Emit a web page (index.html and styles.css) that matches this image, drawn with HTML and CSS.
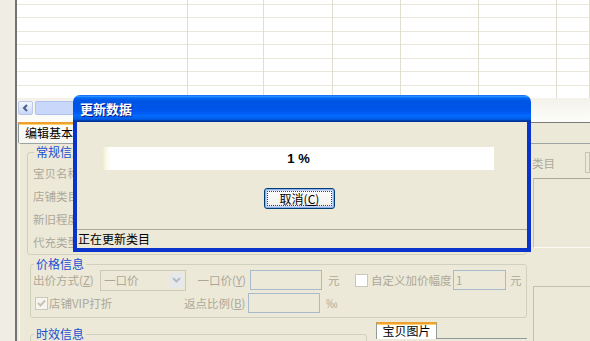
FILE: index.html
```html
<!DOCTYPE html>
<html lang="zh-CN">
<head>
    <meta charset="UTF-8">
    <meta name="viewport" content="width=device-width, initial-scale=1.0">
    <title>宝贝编辑 - 更新数据</title>
    <link rel="stylesheet" href="styles.css">
</head>
<body>
    <div class="app">
        <!-- item list (scrolled) -->
        <div class="grid">
            <div class="col"></div>
            <div class="col"></div>
            <div class="col"></div>
            <div class="col"></div>
            <div class="col"></div>
            <div class="col"></div>
            <div class="col"></div>
        </div>
        <div class="hscroll">
            <span class="sb-btn">
                <svg width="7" height="8" viewBox="0 0 7 8"><path d="M5 1 L2 4 L5 7" fill="none" stroke="#4d6185" stroke-width="2"/></svg>
            </span>
            <span class="sb-thumb"></span>
        </div>

        <div class="tabstrip">
            <span class="tab">编辑基本信息</span>
            <span class="tabstrip-rest"></span>
        </div>

        <div class="panel">
            <div class="main-col">
                <fieldset class="group g-basic">
                    <legend>常规信息</legend>
                    <div class="row"><span class="lbl">宝贝名称</span></div>
                    <div class="row"><span class="lbl">店铺类目</span></div>
                    <div class="row"><span class="lbl">新旧程度</span></div>
                    <div class="row"><span class="lbl">代充类型</span></div>
                </fieldset>

                <fieldset class="group g-price">
                    <legend>价格信息</legend>
                    <div class="prow">
                        <span class="lbl w-mode">出价方式(<u>Z</u>)</span>
                        <span class="select">
                            <span class="select-val">一口价</span>
                            <span class="select-btn">
                                <svg width="9" height="6" viewBox="0 0 9 6"><path d="M1 1 L4.5 4.5 L8 1" fill="none" stroke="#b4bccb" stroke-width="2"/></svg>
                            </span>
                        </span>
                        <span class="lbl w-right">一口价(<u>Y</u>)</span>
                        <span class="field w-price"></span>
                        <span class="lbl unit">元</span>
                        <span class="cb"></span>
                        <span class="lbl w-custom">自定义加价幅度</span>
                        <span class="field w-small">1</span>
                        <span class="lbl unit-end">元</span>
                    </div>
                    <div class="prow second">
                        <span class="cb checked">
                            <svg width="9" height="9" viewBox="0 0 9 9"><path d="M1 4 L3.5 6.5 L8 1.5" fill="none" stroke="#c6c4b6" stroke-width="2"/></svg>
                        </span>
                        <span class="lbl w-vip">店铺VIP打折</span>
                        <span class="lbl w-right">返点比例(<u>B</u>)</span>
                        <span class="field w-price"></span>
                        <span class="lbl unit">‰</span>
                    </div>
                </fieldset>

                <div class="bottom-row">
                    <fieldset class="group g-time">
                        <legend>时效信息</legend>
                    </fieldset>
                    <div class="pic-tabs">
                        <span class="tab small">宝贝图片</span>
                    </div>
                </div>
            </div>

            <div class="side">
                <div class="side-row">
                    <span class="lbl side-lbl">类目</span>
                    <span class="side-field"></span>
                </div>
                <div class="side-box"></div>
                <div class="side-box lower"></div>
            </div>
        </div>
    </div>

    <!-- modal progress dialog -->
    <div class="dialog">
        <div class="dlg-title">更新数据</div>
        <div class="dlg-body">
            <div class="progress">1 %</div>
            <button type="button" class="btn"><span class="btn-focus">取消(<u>C</u>)</span></button>
            <div class="status">正在更新类目</div>
        </div>
    </div>
</body>
</html>
```

FILE: styles.css
```css
html, body {
    margin: 0;
    padding: 0;
}

body {
    width: 590px;
    height: 341px;
    overflow: hidden;
    position: relative;
    background-color: #efede4;
    font-family: "Noto Sans CJK SC", "Liberation Sans", sans-serif;
    font-size: 11.5px;
    color: #000;
}

u {
    text-decoration: underline;
}

.app {
    margin-left: 15px;
    height: 341px;
    border-left: 2px solid #727272;
    background-color: #ece9d8;
    overflow: hidden;
}

/* list grid */
.grid {
    display: grid;
    grid-template-columns: 171px 76px 69px 68px 78px 78px 1fr;
    height: 98px;
    background-color: #fff;
    background-image: linear-gradient(to bottom, #ebe7d8 0, #ebe7d8 1px, transparent 1px, transparent 13px, #ebe7d8 13px, #ebe7d8 14px, transparent 14px);
    background-size: 100% 27px;
    background-position: 0 4px;
}

.col {
    border-right: 1px solid #e3dfcf;
}

.hscroll {
    display: flex;
    align-items: flex-start;
    height: 24px;
    box-sizing: border-box;
    padding: 3px 0 0 1px;
    background: linear-gradient(to bottom, #f3f1ea, #fdfdfa);
}

.sb-btn {
    display: flex;
    align-items: center;
    justify-content: center;
    width: 15px;
    height: 14px;
    box-sizing: border-box;
    border: 1px solid #b9c8e8;
    border-radius: 2px;
    background: linear-gradient(to bottom, #f4f7fe, #c9d7f8);
}

.sb-thumb {
    width: 300px;
    height: 14px;
    margin-left: 2px;
    box-sizing: border-box;
    border: 1px solid #aec0ee;
    border-radius: 2px;
    background-color: #c9d7fa;
}

/* tabs */
.tabstrip {
    display: flex;
    height: 21px;
}

.tab {
    width: 90px;
    margin-left: 1px;
    box-sizing: border-box;
    padding-left: 6px;
    line-height: 18px;
    font-size: 12px;
    border-top: 2px solid #f0a030;
    border-left: 1px solid #919b9c;
    box-shadow: inset 0 1px 0 #ffd36b;
    background: linear-gradient(to bottom, #fffffd, #f6f5ef);
}

.tabstrip-rest {
    flex: 1;
    border-top: 1px solid #7b7b7b;
}

.panel {
    display: flex;
    height: 197px;
    margin-left: 2px;
    padding-left: 7px;
    border-top: 1px solid #9ca3a3;
    border-left: 1px solid #fbfaf5;
}

.main-col {
    width: 500px;
    display: flex;
    flex-direction: column;
}

/* group boxes */
.group {
    margin: 0;
    box-sizing: border-box;
    min-width: 0;
    border: 1px solid #d0d0bf;
    border-radius: 3px;
}

.group legend {
    margin-left: 1px;
    padding: 0 2px;
    color: #1a4fd2;
    font-size: 12px;
    line-height: 12px;
}

.g-basic {
    width: 500px;
    margin-top: 1px;
    padding: 2px 5px 1px;
}

.g-basic legend {
    line-height: 14px;
}

.row {
    display: flex;
    align-items: center;
    height: 23px;
}

.lbl {
    color: #aca899;
    white-space: nowrap;
}

.g-price {
    width: 497px;
    margin: 3px 0 0 3px;
    padding: 0 2px 4px;
}

.prow {
    display: flex;
    align-items: center;
    height: 20px;
}

.prow.second {
    margin-top: 3px;
}

.w-mode {
    width: 67px;
}

.select {
    display: flex;
    align-items: center;
    width: 86px;
    height: 21px;
    box-sizing: border-box;
    border: 1px solid #cbc9bc;
    padding: 0 2px 0 3px;
}

.select-val {
    flex: 1;
    color: #aca899;
}

.select-btn {
    display: flex;
    align-items: center;
    justify-content: center;
    width: 13px;
    height: 15px;
    border-radius: 2px;
    background-color: #e7e8ec;
}

.w-right {
    width: 64px;
    box-sizing: border-box;
    padding-right: 4px;
    text-align: right;
}

.field {
    height: 20px;
    box-sizing: border-box;
    border: 1px solid #a9bacd;
    padding-left: 2px;
    line-height: 18px;
    color: #aca899;
}

.w-price {
    width: 72px;
}

.w-small {
    width: 53px;
}

.unit {
    width: 33px;
    box-sizing: border-box;
    padding-left: 6px;
}

.unit-end {
    padding-left: 4px;
}

.cb {
    display: flex;
    align-items: center;
    justify-content: center;
    width: 13px;
    height: 13px;
    box-sizing: border-box;
    border: 1px solid #cac8bb;
    background-color: #fff;
}

.cb.checked {
    margin-left: 2px;
    background-color: #f5f4ee;
}

.w-custom {
    width: 85px;
    box-sizing: border-box;
    padding-left: 3px;
}

.w-vip {
    width: 136px;
    box-sizing: border-box;
    padding-left: 1px;
}

.bottom-row {
    display: flex;
    margin-left: 3px;
}

.g-time {
    width: 337px;
    height: 40px;
    margin-top: 10px;
    padding: 0 2px;
}

.pic-tabs {
    display: flex;
    flex: 1;
    height: 16px;
    margin: 4px 0 0 9px;
    border-bottom: 1px solid #919b9c;
}

.tab.small {
    width: 61px;
    height: 17px;
    margin: 0 0 -1px 0;
    padding: 0;
    border-right: 1px solid #919b9c;
    text-align: center;
    line-height: 14px;
    background: #fff;
}

/* right strip */
.side {
    width: 59px;
    margin-left: 4px;
    display: flex;
    flex-direction: column;
}

.side-row {
    display: flex;
    align-items: center;
    height: 21px;
    margin-top: 8px;
}

.side-lbl {
    width: 54px;
    box-sizing: border-box;
    padding-left: 1px;
}

.side-field {
    flex: 1;
    height: 21px;
    box-sizing: border-box;
    border: 1px solid #c6c3b5;
}

.side-box {
    height: 77px;
    margin: 5px 0 0 2px;
    box-sizing: border-box;
    border-top: 1px solid #aaa798;
    border-left: 1px solid #c3c0b1;
    border-bottom: 1px solid #fbfaf5;
}

.side-box.lower {
    height: 60px;
    margin-top: 38px;
    border-top-color: #c3c0b1;
    border-bottom: none;
}

/* dialog */
.dialog {
    position: absolute;
    left: 73px;
    top: 95px;
    width: 458px;
}

.dlg-title {
    height: 27px;
    padding-left: 7px;
    border-radius: 7px 7px 0 0;
    background: linear-gradient(to bottom, #0058ee 0%, #3593ff 4%, #288eff 6%, #127dff 8%, #036ffc 10%, #0262ee 14%, #0057e5 20%, #0054e3 24%, #0055eb 56%, #005bf5 66%, #026afe 76%, #0062ef 86%, #0052d6 92%, #0040ab 94%, #003092 100%);
    color: #fff;
    font-size: 13px;
    font-weight: bold;
    line-height: 27px;
    text-shadow: 1px 1px 0 #0a1883;
}

.dlg-body {
    display: flex;
    flex-direction: column;
    align-items: flex-start;
    height: 130px;
    box-sizing: border-box;
    border: 4px solid #0a33cc;
    border-top: none;
    background-color: #ece9d8;
}

.progress {
    display: flex;
    align-items: center;
    justify-content: center;
    width: 391px;
    height: 23px;
    margin: 25px 0 0 26px;
    background: linear-gradient(to right, #f1eecb 0, #fbfaee 4px, #fff 8px);
    font-family: "Liberation Sans", sans-serif;
    font-size: 13px;
    font-weight: bold;
}

.btn {
    display: flex;
    width: 71px;
    height: 21px;
    margin: 18px 0 0 187px;
    padding: 2px;
    box-sizing: border-box;
    border: 1px solid #003c74;
    border-radius: 3px;
    background: linear-gradient(to bottom, #fff, #f3f2ee 80%, #d9d5cb);
    box-shadow: inset 0 0 0 1px #8fb0e8, inset 0 0 0 2px #c6d8fb;
    font-family: inherit;
    font-size: 12px;
    color: #000;
}

.btn-focus {
    flex: 1;
    display: flex;
    align-items: center;
    justify-content: center;
    border: 1px dotted #444;
    line-height: 11px;
}

.status {
    align-self: stretch;
    height: 19px;
    margin-top: 20px;
    box-sizing: border-box;
    padding-left: 1px;
    border-top: 1px solid #aca899;
    line-height: 18px;
    font-size: 12px;
}
```
